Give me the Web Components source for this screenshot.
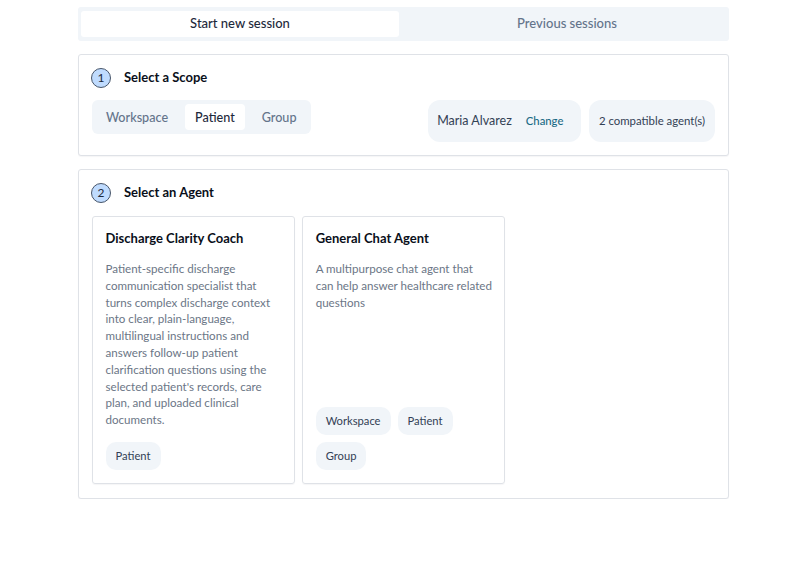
<!DOCTYPE html>
<html>
<head>
<meta charset="utf-8">
<style>
  html, body { margin: 0; background: #fff; }
  body { font-family: "Lato", "Noto Sans", sans-serif; color: #1e293b; }
</style>
</head>
<body>
<session-page>
  <session-tabs></session-tabs>
  <step-card step="1" heading="Select a Scope">
    <scope-row>
      <scope-toggle></scope-toggle>
      <info-pill class="name"><span>Maria Alvarez</span><a>Change</a></info-pill>
      <info-pill>2 compatible agent(s)</info-pill>
    </scope-row>
  </step-card>
  <step-card step="2" heading="Select an Agent">
    <agent-grid>
      <agent-card heading="Discharge Clarity Coach" tags="Patient">Patient-specific discharge communication specialist that turns complex discharge context into clear, plain-language, multilingual instructions and answers follow-up patient clarification questions using the selected patient's records, care plan, and uploaded clinical documents.</agent-card>
      <agent-card heading="General Chat Agent" tags="Workspace,Patient,Group">A multipurpose chat agent that can help answer healthcare related questions</agent-card>
    </agent-grid>
  </step-card>
</session-page>

<script>
// Small helper so each component only declares its css and markup
class ShadowBase extends HTMLElement {
  constructor() {
    super();
    this.attachShadow({ mode: 'open' });
  }
  connectedCallback() {
    this.shadowRoot.innerHTML = `<style>${this.getStyles()}</style>${this.getTemplate()}`;
  }
  getStyles() { return ''; }
  getTemplate() { return '<slot></slot>'; }
}

class SessionPage extends ShadowBase {
  getStyles() {
    return `
      :host { display: flex; flex-direction: column; gap: 13px; width: 651px; margin-left: 78px; padding-top: 7px; box-sizing: border-box; }
    `;
  }
}

class SessionTabs extends ShadowBase {
  getStyles() {
    return `
      :host { display: flex; gap: 9px; padding: 4px 3px; height: 34px; box-sizing: border-box; background: #f1f5f9; border-radius: 3px; }
      div { flex: 1; display: flex; align-items: center; justify-content: center; padding-bottom: 2px; box-sizing: border-box; font-size: 13px; font-weight: 500; color: #64748b; border-radius: 3px; }
      .on { background: #fff; color: #1e293b; }
    `;
  }
  getTemplate() {
    return `<div class="on">Start new session</div><div>Previous sessions</div>`;
  }
}

class StepCard extends ShadowBase {
  getStyles() {
    return `
      :host { display: block; border: 1px solid #dfe2e7; border-radius: 3px; padding: 12px 13px 13px; background: #fff; box-shadow: 0 1px 1px rgba(15,23,42,.04); }
      header { display: flex; align-items: center; gap: 13px; height: 22px; margin-bottom: 11px; }
      .num { width: 20px; height: 20px; border-radius: 50%; background: #bfdbfe; border: 1px solid #475569; box-sizing: border-box; display: flex; align-items: center; justify-content: center; padding-bottom: 1px; font-size: 12px; color: #1e293b; margin-left: -1px; }
      h2 { margin: 0; padding-bottom: 2px; font-size: 13px; font-weight: 700; color: #0a0f1a; }
    `;
  }
  getTemplate() {
    return `<header><span class="num">${this.getAttribute('step')}</span><h2>${this.getAttribute('heading')}</h2></header><slot></slot>`;
  }
}

class ScopeRow extends ShadowBase {
  getStyles() {
    return `
      :host { display: flex; align-items: flex-start; gap: 8px; }
      ::slotted(scope-toggle) { margin-right: auto; }
    `;
  }
}

class ScopeToggle extends ShadowBase {
  getStyles() {
    return `
      :host { display: flex; gap: 7px; height: 34px; padding: 4px; box-sizing: border-box; background: #f1f5f9; border-radius: 6px; }
      div { display: flex; align-items: center; padding: 0 10px; font-size: 12.6px; font-weight: 500; color: #64748b; border-radius: 4px; }
      .on { background: #fff; color: #1e293b; }
    `;
  }
  getTemplate() {
    return ['Workspace', 'Patient', 'Group']
      .map(s => `<div class="${s === 'Patient' ? 'on' : ''}">${s}</div>`).join('');
  }
}

class InfoPill extends ShadowBase {
  getStyles() {
    return `
      :host { display: flex; align-items: center; gap: 14px; height: 42px; padding: 0 10px 2px 9.5px; box-sizing: border-box; background: #f1f5f9; border-radius: 12px; font-size: 11.4px; color: #334155; }
      :host(.name) { font-size: 12.5px; padding-left: 9px; padding-right: 18px; }
      ::slotted(a) { color: #1a6a85; font-size: 11.3px; font-weight: 500; }
    `;
  }
}

class AgentGrid extends ShadowBase {
  getStyles() {
    return `
      :host { display: grid; grid-template-columns: repeat(3, 1fr); gap: 7px; margin: 12px 0 1px -.5px; }
    `;
  }
}

class AgentCard extends ShadowBase {
  getStyles() {
    return `
      :host { display: flex; flex-direction: column; min-height: 268px; border: 1px solid #dfe2e7; border-radius: 3px; padding: 13px; box-sizing: border-box; box-shadow: 0 1px 1px rgba(15,23,42,.04); }
      h3 { margin: -1px 0 14px; font-size: 13px; line-height: 18px; font-weight: 700; color: #0a0f1a; }
      p { margin: 0 -2px 12px 0; font-size: 11.6px; line-height: 16.8px; color: #6b7686; flex: 1; }
      .tags { display: flex; flex-wrap: wrap; gap: 7px; }
      .tag { display: flex; align-items: center; height: 28px; padding: 0 10px 1px; box-sizing: border-box; border-radius: 10px; background: #f1f5f9; font-size: 11.2px; color: #334155; }
    `;
  }
  getTemplate() {
    const tags = this.getAttribute('tags').split(',').map(t => `<span class="tag">${t}</span>`).join('');
    return `<h3>${this.getAttribute('heading')}</h3><p><slot></slot></p><div class="tags">${tags}</div>`;
  }
}

customElements.define('session-page', SessionPage);
customElements.define('session-tabs', SessionTabs);
customElements.define('step-card', StepCard);
customElements.define('scope-row', ScopeRow);
customElements.define('scope-toggle', ScopeToggle);
customElements.define('info-pill', InfoPill);
customElements.define('agent-grid', AgentGrid);
customElements.define('agent-card', AgentCard);
</script>
</body>
</html>
